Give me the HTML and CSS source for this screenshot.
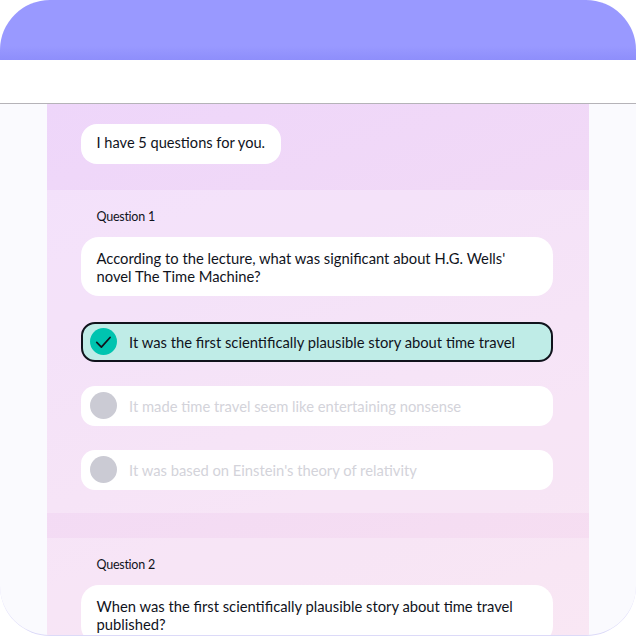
FILE: index.html
```html
<!DOCTYPE html>
<html lang="en">
<head>
    <meta charset="UTF-8">
    <meta name="viewport" content="width=device-width, initial-scale=1.0">
    <title>Quiz</title>
    <link rel="stylesheet" href="styles.css">
</head>
<body>
    <div class="frame">
        <div class="top-bar"></div>
        <div class="title-bar"></div>
        <div class="page">
            <main class="chat">
                <section class="intro">
                    <p class="bubble">I have 5 questions for you.</p>
                </section>

                <section class="question">
                    <h2 class="question-label">Question 1</h2>
                    <p class="bubble bubble-wide">According to the lecture, what was significant about H.G. Wells' novel The Time Machine?</p>
                    <ul class="options">
                        <li class="option correct">
                            <span class="mark">
                                <svg viewBox="0 0 28 28" width="28" height="28">
                                    <path d="M7 14.5l4.8 4.8 9-10" fill="none" stroke="#10131c" stroke-width="1.8" stroke-linecap="round" stroke-linejoin="round"/>
                                </svg>
                            </span>
                            It was the first scientifically plausible story about time travel
                        </li>
                        <li class="option"><span class="mark"></span>It made time travel seem like entertaining nonsense</li>
                        <li class="option"><span class="mark"></span>It was based on Einstein's theory of relativity</li>
                    </ul>
                </section>

                <div class="divider"></div>

                <section class="question">
                    <h2 class="question-label">Question 2</h2>
                    <p class="bubble bubble-wide">When was the first scientifically plausible story about time travel published?</p>
                </section>
            </main>
        </div>
    </div>
</body>
</html>
```

FILE: styles.css
```css
* {
    margin: 0;
    padding: 0;
    box-sizing: border-box;
}

html, body {
    height: 636px;
    overflow: hidden;
    background-color: white;
}

body {
    font-family: "Lato", "Open Sans", sans-serif;
    color: #10131c;
}

.frame {
    width: 636px;
    height: 636px;
    border-radius: 50px;
    border-bottom: 1px solid #dcdaf8;
    overflow: hidden;
    display: flex;
    flex-direction: column;
    background-color: #fafafe;
}

.top-bar {
    height: 60px;
    flex-shrink: 0;
    background: linear-gradient(to bottom, #9999ff 0, #9999ff 46px, #8e8efb 60px);
}

.title-bar {
    height: 44px;
    flex-shrink: 0;
    background-color: white;
    border-bottom: 1px solid #b5b3b8;
}

.page {
    flex: 1;
    display: flex;
    justify-content: center;
    min-height: 0;
}

.chat {
    width: 542px;
    margin-right: 1px;
    background: linear-gradient(160deg, #eed6fa 0%, #f7dff0 100%);
    overflow: hidden;
}

.intro {
    height: 86px;
    padding: 20px 34px 0;
}

.question {
    padding: 18px 36px 23px 34px;
    background-color: rgba(255, 255, 255, 0.25);
}

.divider {
    height: 25px;
}

.question-label {
    font-size: 12.5px;
    font-weight: 400;
    letter-spacing: -0.02em;
    line-height: 17px;
    margin: 0 0 12px 16px;
}

.bubble {
    display: inline-block;
    background-color: white;
    border-radius: 16px;
    padding: 9px 16px 11px;
    font-size: 14.6px;
    line-height: 20px;
}

.bubble-wide {
    display: block;
    width: 472px;
    padding: 12px 16px 11px;
    font-size: 14.75px;
    line-height: 18px;
    border-radius: 18px;
}

.options {
    list-style: none;
    margin-top: 26px;
    display: flex;
    flex-direction: column;
    gap: 24px;
    width: 472px;
}

.option {
    height: 40px;
    display: flex;
    align-items: center;
    gap: 12.5px;
    padding: 0 0 1px 9px;
    background-color: white;
    border-radius: 14px;
    font-size: 14.75px;
    color: #d3d3da;
}

.mark {
    width: 27px;
    height: 27px;
    flex-shrink: 0;
    border-radius: 50%;
    background-color: #cbcbd4;
    display: flex;
    align-items: center;
    justify-content: center;
}

.correct {
    background-color: #bfece7;
    border: 2px solid #10131c;
    color: #10131c;
    padding-left: 7px;
}

.correct .mark {
    background-color: #00c4b0;
}
```
